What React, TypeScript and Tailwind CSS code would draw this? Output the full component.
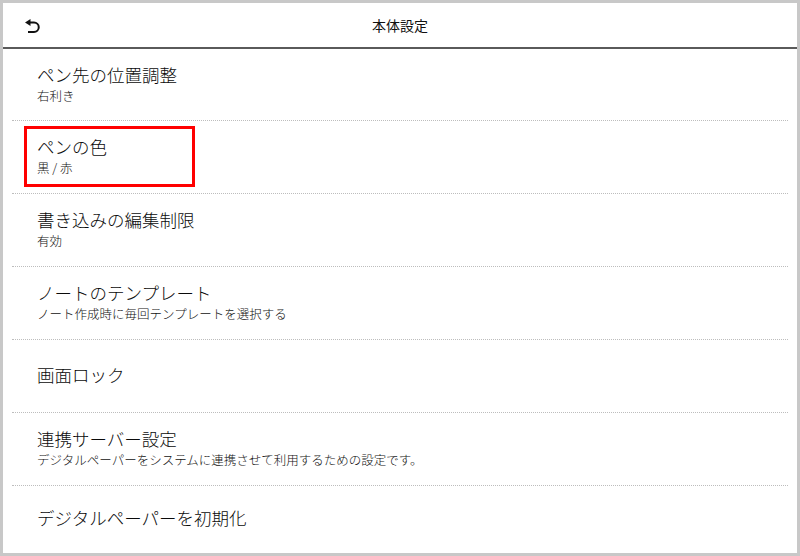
import React from "react";

const rows: { title: string; sub?: string; h: string }[] = [
  { title: "ペン先の位置調整", sub: "右利き", h: "h-[72px]" },
  { title: "ペンの色", sub: "黒 / 赤", h: "h-[73px]" },
  { title: "書き込みの編集制限", sub: "有効", h: "h-[73px]" },
  { title: "ノートのテンプレート", sub: "ノート作成時に毎回テンプレートを選択する", h: "h-[73px]" },
  { title: "画面ロック", h: "h-[73px]" },
  { title: "連携サーバー設定", sub: "デジタルペーパーをシステムに連携させて利用するための設定です。", h: "h-[73px]" },
];

function BackIcon() {
  return (
    <svg width="16" height="16" viewBox="0 0 16 16" fill="none">
      <path d="M1 4.5 L6.5 1 L6.5 8 Z" fill="#111" />
      <path d="M5.5 4.5 H10 A4.75 4.75 0 0 1 10 14 H4" stroke="#111" strokeWidth="2" fill="none" />
    </svg>
  );
}

export default function App() {
  return (
    <div
      className="w-[800px] h-[556px] border-[3px] border-[#c8c8c8] bg-white flex flex-col overflow-hidden font-light"
      style={{ fontFamily: '"Noto Sans CJK JP", "Noto Sans", sans-serif' }}
    >
      <div className="relative h-[44px] shrink-0 flex items-center justify-center">
        <div className="absolute left-[21px] top-[15px]">
          <BackIcon />
        </div>
        <span className="text-[14px] leading-[20px] text-[#111] font-normal">本体設定</span>
      </div>
      <div className="h-[2px] shrink-0 bg-[#5a5a5a]" />
      {rows.map((r, i) => (
        <div key={i} className={`relative ${r.h} shrink-0 mx-[9px] border-b border-dotted border-[#bdbdbd] flex flex-col justify-center pl-[25px] pb-[3px]`}>
          <div className="text-[17.5px] leading-[24px] text-[#0a0a0a]">{r.title}</div>
          {r.sub && <div className="mt-[1px] text-[12.5px] leading-[16px] text-[#111]">{r.sub}</div>}
          {i === 1 && (
            <div className="absolute left-[12px] top-[5px] w-[171px] h-[61px] border-[3px] border-[#ff0000]" />
          )}
        </div>
      ))}
      <div className="flex-1 mx-[9px] flex flex-col justify-center pl-[25px] pb-[3px]">
        <div className="text-[17.5px] leading-[24px] text-[#0a0a0a]">デジタルペーパーを初期化</div>
      </div>
    </div>
  );
}
